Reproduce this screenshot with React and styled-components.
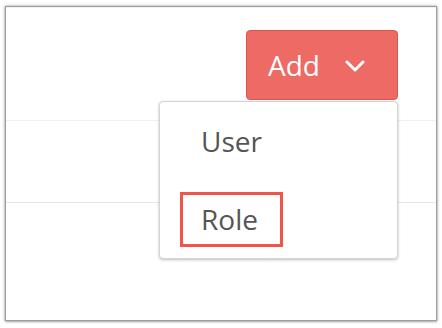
import React from "react";
import styled, { createGlobalStyle } from "styled-components";

const Global = createGlobalStyle`
  html, body { margin: 0; padding: 0; background: #ffffff; }
  body { font-family: "Open Sans", "Liberation Sans", sans-serif; }
`;

const Page = styled.div`
  padding: 6px 0 0 5px;
  width: 442px;
  height: 328px;
  box-sizing: border-box;
`;

const Frame = styled.div`
  width: 432px;
  height: 315px;
  box-sizing: border-box;
  border: 1px solid #9c9c9c;
  box-shadow: 0 0 3px rgba(0, 0, 0, 0.35), 0 1px 2px rgba(0, 0, 0, 0.2);
  background: #ffffff;
  display: flex;
  flex-direction: column;
`;

const Toolbar = styled.div`
  height: 114px;
  box-sizing: border-box;
  border-top: 1px solid #f1f4f7;
  border-bottom: 1px solid #eef1f4;
  display: flex;
  justify-content: flex-end;
  align-items: flex-start;
  padding: 22px 38px 0 0;
`;

const Row = styled.div`
  height: 82px;
  box-sizing: border-box;
  border-bottom: 1px solid #e8e8e8;
`;

const DropdownWrap = styled.div`
  position: relative;
`;

const AddButton = styled.button`
  width: 152px;
  height: 70px;
  box-sizing: border-box;
  display: flex;
  align-items: center;
  padding: 0 0 0 21px;
  border: 1px solid #e0564f;
  border-radius: 4px;
  background: #ee6a64;
  color: #ffffff;
  font-family: "Open Sans", "Liberation Sans", sans-serif;
  font-size: 28px;
  line-height: 38px;
  cursor: pointer;
`;

const Chevron = styled.svg`
  margin-left: 25px;
  margin-top: 2px;
`;

const Menu = styled.ul`
  position: absolute;
  top: 71px;
  right: 0;
  width: 239px;
  height: 158px;
  box-sizing: border-box;
  margin: 0;
  padding: 12px 0 0 20px;
  list-style: none;
  background: #ffffff;
  border: 1px solid #d4d4d4;
  border-radius: 4px;
  box-shadow: 0 1px 3px rgba(0, 0, 0, 0.25);
  display: flex;
  flex-direction: column;
  align-items: flex-start;
  gap: 23px;
`;

const MenuItem = styled.li`
  box-sizing: border-box;
  padding: 5px 22px 6px 18px;
  border: 3px solid ${(p) => (p.$active ? "#f0554a" : "transparent")};
  color: #555555;
  font-size: 28px;
  line-height: 38px;
`;

export default function App() {
  return (
    <>
      <Global />
      <Page>
        <Frame>
          <Toolbar>
            <DropdownWrap>
              <AddButton>
                Add
                <Chevron width="20" height="12" viewBox="0 0 20 12">
                  <path
                    d="M2 2 L10 10 L18 2"
                    fill="none"
                    stroke="#ffffff"
                    strokeWidth="3"
                    strokeLinecap="round"
                    strokeLinejoin="round"
                  />
                </Chevron>
              </AddButton>
              <Menu>
                <MenuItem>User</MenuItem>
                <MenuItem $active>Role</MenuItem>
              </Menu>
            </DropdownWrap>
          </Toolbar>
          <Row />
        </Frame>
      </Page>
    </>
  );
}
